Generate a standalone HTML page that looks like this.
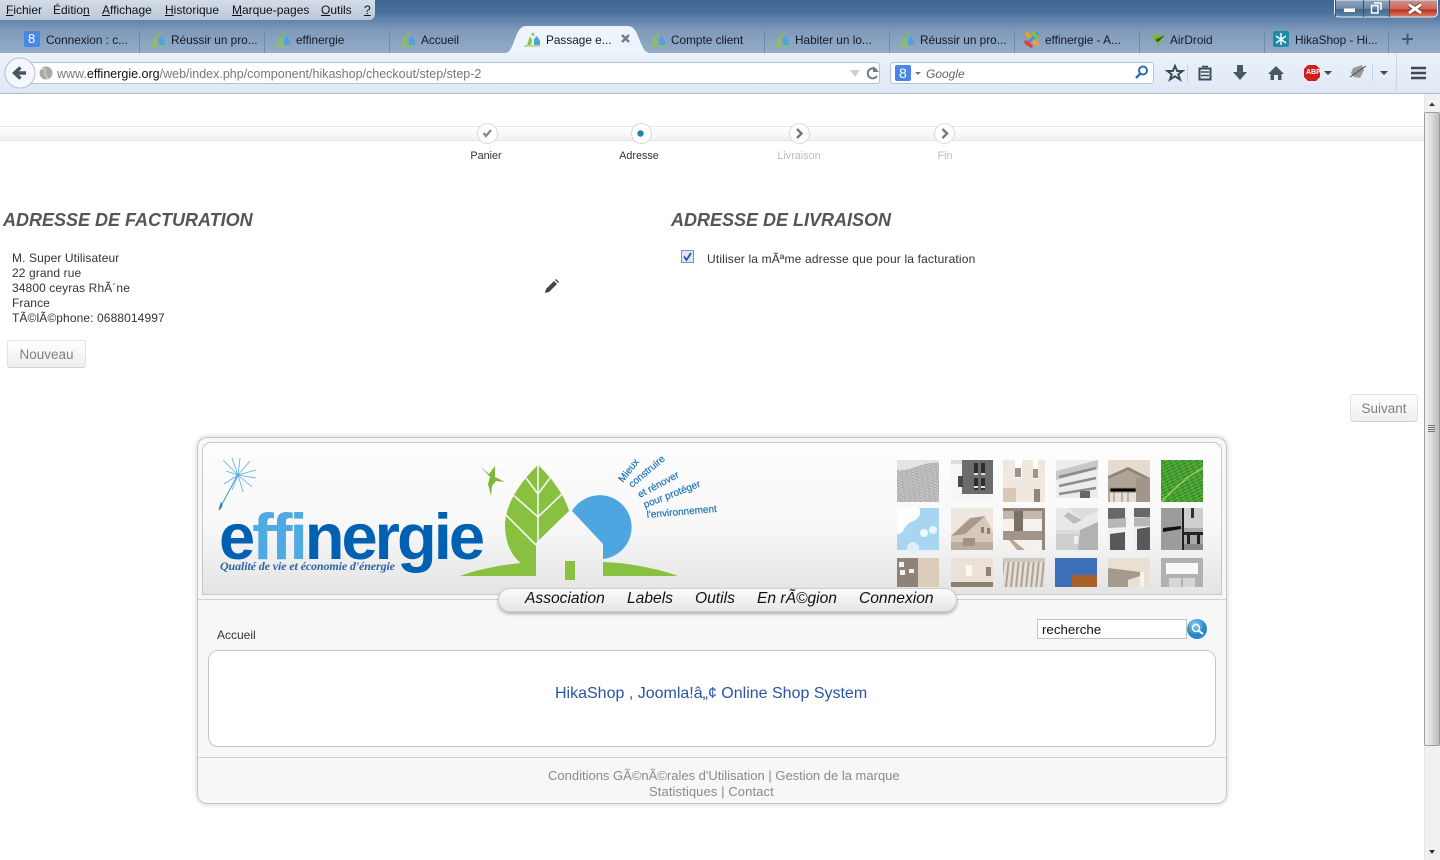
<!DOCTYPE html>
<html lang="fr"><head><meta charset="utf-8"><title>effinergie</title>
<style>
html,body{margin:0;padding:0;width:1440px;height:860px;overflow:hidden;background:#fff;font-family:"Liberation Sans",sans-serif}
.a{position:absolute;white-space:nowrap}
#title{left:0;top:0;width:1440px;height:53px;background:linear-gradient(#3c6494 0,#4a709e 12px,#7f9aba 30px,#93abc7 52px)}
#menu{left:0;top:0;width:375px;height:20px;background:linear-gradient(#d3dce7,#bcc9d9);border-radius:0 0 6px 0;font-size:12px;color:#111}
#menu span{position:absolute;top:3px}
#menu u{text-decoration:underline}
.tab{top:33px;font-size:11.8px;color:#101a28}
.sep{top:31px;width:1px;height:22px;background:#6f89a8}
#nav{left:0;top:53px;width:1440px;height:40px;background:linear-gradient(#eaf2fb,#dfe9f5);border-bottom:1px solid #aebccb}
#url{left:28px;top:62px;width:852px;height:22px;background:#fff;border:1px solid #b4c3d3;border-left:0;border-radius:0 3px 3px 0;box-sizing:border-box;font-size:12.5px;color:#777;line-height:22px;padding-left:29px}
#url b{font-weight:normal;color:#111}
#srch{left:890px;top:62px;width:264px;height:22px;background:#fff;border:1px solid #b4c3d3;border-radius:3px;box-sizing:border-box}
#bar{left:0;top:126px;width:1424px;height:15px;box-sizing:border-box;background:linear-gradient(#fff,#f1f1f1);border-top:1px solid #e6e6e6;border-bottom:1px solid #e6e6e6}
.c{top:123px;width:19px;height:19px;border-radius:50%;background:#fff;border:1px solid #d8d8d8}
.sl{top:150px;font-size:10.8px;line-height:13px;transform:translateX(-50%)}
h2{margin:0;position:absolute;top:209px;font-size:18px;line-height:22px;font-style:italic;font-weight:bold;color:#555;white-space:nowrap}
.t{font-size:12px;color:#333;line-height:15px;letter-spacing:.1px}
.btn{box-sizing:border-box;border:1px solid #e2e2e2;border-bottom-color:#d0d0d0;border-radius:3px;background:linear-gradient(#fff,#eee);font-size:13.5px;color:#808080;text-align:center}
#sb{left:1424px;top:94px;width:16px;height:766px;background:#f0f0f0;border-left:1px solid #e4e4e4;box-sizing:border-box}
#th{left:1424px;top:112px;width:16px;height:634px;box-sizing:border-box;border:1px solid #9d9d9d;border-radius:2px;background:linear-gradient(90deg,#f2f2f2,#dcdcdc 45%,#bdbdbd)}
#box{left:197px;top:437px;width:1030px;height:367px;box-sizing:border-box;background:#f7f7f7;border:1px solid #c6c6c6;border-radius:10px;box-shadow:0 0 6px rgba(0,0,0,.2)}
#hd{left:202px;top:442px;width:1020px;height:153px;box-sizing:border-box;background:linear-gradient(#fdfdfd 0,#f8f8f8 55%,#e4e4e4 100%);border:1px solid #c8c8c8;border-radius:9px 9px 0 0}
.ln{left:198px;width:1028px;height:1px;background:#cfcfcf}
#pill{left:498px;top:588px;width:459px;height:24px;box-sizing:border-box;background:linear-gradient(#fbfbfb,#e6e6e6);border:1px solid #cfcfcf;border-radius:12px;box-shadow:0 2px 3px rgba(0,0,0,.3)}
.m{top:590px;font-size:15.6px;line-height:18px;font-style:italic;color:#111}
#white{left:208px;top:650px;width:1008px;height:97px;box-sizing:border-box;background:#fff;border:1px solid #c6c6c6;border-radius:10px}
.ft{font-size:13px;line-height:16px;color:#8a8a8a}
</style></head><body>

<div class="a" id="title"></div>
<div class="a" id="menu">
<span style="left:6px"><u>F</u>ichier</span><span style="left:53px">Éditio<u>n</u></span><span style="left:102px"><u>A</u>ffichage</span><span style="left:165px"><u>H</u>istorique</span><span style="left:232px"><u>M</u>arque-pages</span><span style="left:321px"><u>O</u>utils</span><span style="left:364px"><u>?</u></span>
</div>

<!-- window buttons -->
<svg class="a" style="left:1334px;top:0" width="104" height="18">
<defs>
<linearGradient id="wb" x1="0" y1="0" x2="0" y2="1"><stop offset="0" stop-color="#8ea5bf"/><stop offset=".5" stop-color="#7189a6"/><stop offset=".55" stop-color="#466789"/><stop offset="1" stop-color="#5f86ab"/></linearGradient>
<linearGradient id="wr" x1="0" y1="0" x2="0" y2="1"><stop offset="0" stop-color="#d98a7f"/><stop offset=".5" stop-color="#c96a5c"/><stop offset=".58" stop-color="#bb3324"/><stop offset="1" stop-color="#dc7a60"/></linearGradient>
</defs>
<path d="M.5 0V12Q.5 17 5.500 17H98.500Q103.500 17 103.500 12V0Z" fill="url(#wb)" stroke="#e8edf3"/>
<path d="M55 1V16.500H98.500Q102.500 16.500 102.500 12V1Z" fill="url(#wr)"/>
<rect x="1" y="0" width="1" height="16" fill="#3a5473"/>
<path d="M29.500 0V17M55.500 0V17" stroke="#3a5473"/>
<rect x="10" y="8.500" width="11" height="3.500" fill="#fff"/>
<path d="M40 3H47V10M37.500 5.500H44V13H37.500Z" fill="none" stroke="#fff" stroke-width="1.500"/>
<path d="M75 4.500L87 13M87 4.500L75 13" stroke="#5a2820" stroke-width="4.500"/>
<path d="M75 4.500L87 13M87 4.500L75 13" stroke="#fff" stroke-width="3"/>
</svg>

<!-- tabs -->
<svg class="a" style="left:0;top:0" width="1330" height="54">
<defs><g id="ef"><path d="M3 14 L6 5 L8 9 L7 14Z" fill="#8cc63f"/><path d="M7 4 L9 1 L11 5Z" fill="#8cc63f"/><path d="M10 14 V8 L13 5 L16 10 V14Z" fill="#4fa3dc"/><path d="M0 15H16" stroke="#8cc63f" stroke-width="1"/></g></defs>
<path d="M505 53 C515 53 514 26 526 26 L628 26 C640 26 639 53 650 53Z" fill="#eef4fb"/>
<rect x="24" y="31" width="16" height="16" rx="2" fill="#4a86e8"/>
<use href="#ef" x="149" y="31"/><use href="#ef" x="274" y="31"/><use href="#ef" x="399" y="31"/><use href="#ef" x="524" y="31"/><use href="#ef" x="649" y="31"/><use href="#ef" x="773" y="31"/><use href="#ef" x="898" y="31"/>
<g transform="translate(1023,30)" fill="none" stroke-width="3.500" stroke-linecap="round"><path d="M4 4 L14 14" stroke="#f4a020"/><path d="M14 4 L4 14" stroke="#5091cd"/><path d="M3 12 L8 16" stroke="#e8402a"/><path d="M10 3 L14 7" stroke="#7ac143"/></g>
<path d="M1149 35 L1165 35 L1158 46 L1155 40Z" fill="#7fb52f"/><path d="M1155 40 L1165 35 L1158 42Z" fill="#2c5a2a"/>
<rect x="1273" y="31" width="16" height="16" rx="2" fill="#1e8aa5"/><path d="M1281 33V45M1276 36L1286 43M1286 36L1276 43" stroke="#fff" stroke-width="1.400"/>
<path d="M622 35 L629 42 M629 35 L622 42" stroke="#6f7b88" stroke-width="2.400"/>
</svg>
<svg class="a" style="left:1395px;top:30px" width="24" height="20"><path d="M7 9H18M12.500 3.500V14.500" stroke="#43597a" stroke-width="2"/></svg>
<div class="a sep" style="left:139px"></div><div class="a sep" style="left:264px"></div><div class="a sep" style="left:389px"></div><div class="a sep" style="left:764px"></div><div class="a sep" style="left:889px"></div><div class="a sep" style="left:1014px"></div><div class="a sep" style="left:1139px"></div><div class="a sep" style="left:1264px"></div><div class="a sep" style="left:1388px"></div>
<div class="a" style="left:28px;top:31px;font-size:13px;color:#fff">8</div>
<div class="a tab" style="left:46px">Connexion : c...</div>
<div class="a tab" style="left:171px">Réussir un pro...</div>
<div class="a tab" style="left:296px">effinergie</div>
<div class="a tab" style="left:421px">Accueil</div>
<div class="a tab" style="left:546px">Passage e...</div>
<div class="a tab" style="left:671px">Compte client</div>
<div class="a tab" style="left:795px">Habiter un lo...</div>
<div class="a tab" style="left:920px">Réussir un pro...</div>
<div class="a tab" style="left:1045px">effinergie - A...</div>
<div class="a tab" style="left:1170px">AirDroid</div>
<div class="a tab" style="left:1295px">HikaShop - Hi...</div>

<!-- nav -->
<div class="a" id="nav"></div>
<div class="a" id="url">www.<b>effinergie.org</b>/web/index.php/component/hikashop/checkout/step/step-2</div>
<div class="a" id="srch"></div>
<div class="a" style="left:926px;top:67px;font-size:12px;font-style:italic;color:#666">Google</div>
<svg class="a" style="left:0;top:53px" width="1440" height="41">
<circle cx="20" cy="20" r="15" fill="#f4f8fc" stroke="#b0bfcf"/>
<path d="M26 20H17M20.500 14.500L14.500 20L20.500 25.500" fill="none" stroke="#4a5563" stroke-width="3.400"/>
<circle cx="46" cy="20" r="6.500" fill="#a8a8a8"/><path d="M41 17C44 14 46 16 45 19C44 22 47 23 48 26" stroke="#ddd" fill="none"/>
<path d="M850 17H860L855 24Z" fill="#c8d0d8"/>
<path d="M876.500 17A5 5 0 1 0 877 23" fill="none" stroke="#6c7f92" stroke-width="2"/><path d="M873 13V19H879Z" fill="#6c7f92"/>
<rect x="895" y="12" width="16" height="16" rx="2" fill="#4a86e8"/>
<path d="M915 19H921L918 22Z" fill="#777"/>
<circle cx="1143" cy="17.500" r="4" fill="none" stroke="#2a6fb5" stroke-width="2"/><path d="M1140 21L1136 25" stroke="#2a6fb5" stroke-width="2.400"/>
<path d="M1175 13L1177.200 18H1182.500L1178.300 21.300L1180 26.500L1175 23.300L1170 26.500L1171.700 21.300L1167.500 18H1172.800Z" fill="none" stroke="#3e4a58" stroke-width="2"/>
<path d="M1187.500 11V30" stroke="#c9d3de"/>
<rect x="1199.500" y="15.500" width="11" height="11" fill="none" stroke="#3e4a58" stroke-width="2"/><path d="M1202 13.500H1208M1201 19H1209M1201 22.500H1209" stroke="#3e4a58" stroke-width="1.600"/>
<path d="M1237 12H1243V19H1247L1240 27L1233 19H1237Z" fill="#4a5766"/>
<path d="M1276 13L1284 21H1281.500V27H1278V22H1274V27H1270.500V21H1268Z" fill="#4a5766"/>
<path d="M1308 12H1316L1320 16V24L1316 28H1308L1304 24V16Z" fill="#d0201c"/>
<path d="M1324 18H1332L1328 22Z" fill="#444"/>
<path d="M1353 15L1362 12L1364 17L1360 25L1354 24L1351 20Z" fill="#9a9a9a"/><path d="M1350 24L1366 13" stroke="#444"/>
<path d="M1372.500 11V28" stroke="#c9d3de"/><path d="M1380 18H1388L1384 22Z" fill="#444"/>
<path d="M1396.500 0V41" stroke="#cdd7e2"/>
<path d="M1411 15H1426M1411 20H1426M1411 25H1426" stroke="#3e4a58" stroke-width="2.600"/>
</svg>
<div class="a" style="left:899px;top:65px;font-size:14px;color:#fff">8</div>
<div class="a" style="left:1306px;top:69px;font-size:7px;font-weight:bold;color:#fff">ABP</div>

<!-- steps -->
<div class="a" id="bar"></div>
<div class="a c" style="left:477px"></div><div class="a c" style="left:631px"></div><div class="a c" style="left:789px"></div><div class="a c" style="left:934px"></div>
<svg class="a" style="left:0;top:120px" width="1000" height="26">
<path d="M483.500 13L486 16L491 10" fill="none" stroke="#888" stroke-width="2.200"/>
<circle cx="640.500" cy="13.500" r="3.200" fill="#1d86a5"/>
<path d="M797 9L801.500 13.500L797 18" fill="none" stroke="#777" stroke-width="2.400"/>
<path d="M942.500 9L947 13.500L942.500 18" fill="none" stroke="#777" stroke-width="2.400"/>
</svg>
<div class="a sl" style="left:486px;color:#333">Panier</div>
<div class="a sl" style="left:639px;color:#333">Adresse</div>
<div class="a sl" style="left:799px;color:#bbb">Livraison</div>
<div class="a sl" style="left:945px;color:#bbb">Fin</div>

<!-- content -->
<h2 style="left:3px">ADRESSE DE FACTURATION</h2>
<h2 style="left:671px">ADRESSE DE LIVRAISON</h2>
<div class="a t" style="left:12px;top:251px">M. Super Utilisateur<br>22 grand rue<br>34800 ceyras RhÃ´ne<br>France<br>TÃ©lÃ©phone: 0688014997</div>
<svg class="a" style="left:543px;top:278px" width="17" height="17"><path d="M2 15L3 11L11 3L14 6L6 14Z" fill="#444"/><path d="M12 2L13 1L16 4L15 5Z" fill="#444"/></svg>
<div class="a btn" style="left:7px;top:340px;width:79px;height:28px;line-height:27px">Nouveau</div>
<div class="a btn" style="left:1350px;top:394px;width:68px;height:28px;line-height:27px">Suivant</div>
<svg class="a" style="left:681px;top:250px" width="14" height="14"><rect x=".5" y=".5" width="12" height="12" fill="#dfe6f5" stroke="#8a8f98"/><path d="M3 6.500L5.500 10L10 3" fill="none" stroke="#2c4fa8" stroke-width="1.800"/></svg>
<div class="a t" style="left:707px;top:252px;letter-spacing:.16px">Utiliser la mÃªme adresse que pour la facturation</div>

<!-- scrollbar -->
<div class="a" id="sb"></div>
<div class="a" id="th"></div>
<svg class="a" style="left:1424px;top:94px" width="16" height="766">
<path d="M5 12H11L8 8.500Z" fill="#333"/><path d="M5 756H11L8 760Z" fill="#333"/>
<path d="M4 331.500H11M4 333.500H11M4 335.500H11M4 337.500H11" stroke="#777"/>
</svg>

<!-- site box -->
<div class="a" id="box"></div>
<div class="a ln" style="top:599px"></div>
<div class="a ln" style="top:757px"></div>
<div class="a" id="hd"></div>

<!-- tiles -->
<svg class="a" style="left:0;top:0" width="1240" height="600">
<defs>
<pattern id="nz" width="5" height="3" patternUnits="userSpaceOnUse" patternTransform="rotate(-8)"><rect width="5" height="3" fill="#c6c6c6"/><path d="M0 1H3M2 2.500H5" stroke="#9c9c9c" stroke-width=".8"/></pattern>
<pattern id="gr" width="6" height="3" patternUnits="userSpaceOnUse" patternTransform="rotate(-25)"><rect width="6" height="3" fill="#48a030"/><path d="M0 1H4" stroke="#2f8424"/><path d="M2 2.500H6" stroke="#6cbb4c" stroke-width=".7"/></pattern>
<pattern id="st" width="5" height="8" patternUnits="userSpaceOnUse" patternTransform="rotate(6)"><rect width="5" height="8" fill="#e6dfd7"/><rect width="2" height="8" fill="#aca297"/></pattern>
</defs>
<!-- row 1 -->
<g transform="translate(897,460)"><rect width="42" height="42" fill="url(#nz)"/><path d="M0 0H42V3C28 0 14 12 0 10Z" fill="#e4e4e4"/></g>
<g transform="translate(951,460)"><rect width="42" height="42" fill="#f6f6f6"/><rect x="0" y="0" width="11" height="4" fill="#ddd"/><rect x="11" y="0" width="31" height="34" fill="#6c6c6c"/><rect x="7" y="16" width="5" height="11" fill="#4a4a4a"/><path d="M23 3h4v10h-4zM30 3h4v10h-4zM23 18h4v12h-4zM30 18h4v12h-4z" fill="#2d2d2d"/><path d="M23 13h4v2h-4zM30 13h4v2h-4zM23 26h4v2h-4zM30 26h4v2h-4z" fill="#ddd"/></g>
<g transform="translate(1003,460)"><rect width="42" height="42" fill="#f0e8de"/><path d="M12 0h7v18h-7zM30 0h5v19h-5z" fill="#fff"/><path d="M12 8h6v9h-6zM30 9h5v9h-5z" fill="#9f9489"/><rect y="28" width="13" height="14" fill="#d9c8b3"/><rect x="31" y="29" width="6" height="13" fill="#8f867c"/></g>
<g transform="translate(1056,460)"><rect width="42" height="42" fill="#ececec"/><path d="M0 11L42 0V9L0 20Z" fill="#c8c8c8"/><path d="M3 17L40 8M3 26L40 18M3 34L40 28" stroke="#8c8c8c" stroke-width="2.500"/><path d="M0 38H42V42H0Z" fill="#fafafa"/><path d="M24 31h10v7h-10z" fill="#666"/></g>
<g transform="translate(1108,460)"><rect width="42" height="42" fill="#e6dbd0"/><path d="M0 18L20 9L42 20V42H0Z" fill="#b0a497"/><path d="M0 16L20 7L42 18V21L20 10L0 19Z" fill="#8f8478"/><rect x="2" y="28" width="26" height="14" fill="#e7dfd6"/><path d="M2 28h26v4h-26zM6 32v10M14 32v10M20 32v10" stroke="#8f8478"/><rect x="28" y="18" width="14" height="24" fill="#a2968a"/></g>
<g transform="translate(1161,460)"><rect width="42" height="42" fill="url(#gr)"/><path d="M0 42C12 30 26 16 42 8" fill="none" stroke="#a7d36f" stroke-width="1.200"/></g>
<!-- row 2 -->
<g transform="translate(897,508)"><rect width="42" height="42" fill="#a8d6f2"/><path d="M0 0H22C26 6 20 12 14 14C6 18 8 26 0 26Z" fill="#fdfefe"/><circle cx="27" cy="25" r="4" fill="#f0f8fd"/><circle cx="36" cy="22" r="4" fill="#eaf5fc"/><circle cx="16" cy="40" r="6" fill="#dceffa"/></g>
<g transform="translate(951,508)"><rect width="42" height="42" fill="#efe8e0"/><path d="M0 28L18 10L34 8L42 24V42H0Z" fill="#d7c9b9"/><path d="M0 28L20 10L34 8L14 26Z" fill="#a89a8a"/><rect y="34" width="42" height="8" fill="#bcae9e"/><rect x="12" y="30" width="12" height="8" fill="#9f9385"/><path d="M30 19h3v6h-3zM36 20h3v6h-3z" fill="#8a7f72"/></g>
<g transform="translate(1003,508)"><rect width="42" height="42" fill="#f5f1ec"/><rect width="42" height="3" fill="#8e8378"/><path d="M0 3h42v8h-42z" fill="#c5b8aa"/><rect x="11" y="3" width="9" height="25" fill="#7a7067"/><rect y="23" width="40" height="9" fill="#a2958a"/><rect x="39" y="0" width="3" height="42" fill="#94887c"/><path d="M10 32L22 42H14L6 32Z" fill="#b5a899"/></g>
<g transform="translate(1056,508)"><rect width="42" height="42" fill="#ddd"/><path d="M0 0H12L26 11L42 2V18L28 22L0 22Z" fill="#e9e9e9"/><path d="M12 4L26 12L18 16L8 8Z" fill="#bdbdbd"/><path d="M24 22L42 14V42H22Z" fill="#b2b2b2"/><rect y="26" width="22" height="16" fill="#cfcfcf"/><rect x="18" y="28" width="4" height="8" fill="#f0f0f0"/></g>
<g transform="translate(1108,508)"><rect width="42" height="42" fill="#f0f0f0"/><path d="M0 0h17v11h-17zM26 0h16v9h-16z" fill="#686868"/><path d="M0 11L42 9V18L0 20Z" fill="#b7b7b7"/><path d="M2 26L17 24V42H2ZM29 21L42 19V42H29Z" fill="#585858"/><rect x="18" y="0" width="8" height="42" fill="#f4f4f4"/></g>
<g transform="translate(1161,508)"><rect width="42" height="42" fill="#a9a9a9"/><path d="M0 0h20v42h-20z" fill="#9c9c9c"/><rect x="21" y="0" width="2" height="42" fill="#1e1e1e"/><path d="M2 20L20 18V21L2 24Z" fill="#111"/><path d="M23 0h19v20h-19z" fill="#cfcfcf"/><rect x="30" y="0" width="3" height="10" fill="#333"/><path d="M23 24h19v3h-19zM26 27h3v12h-3zM36 27h3v12h-3z" fill="#222"/><rect x="23" y="36" width="19" height="6" fill="#888"/></g>
<!-- row 3 -->
<g transform="translate(897,558)"><rect width="42" height="29" fill="#dccdbb"/><rect width="21" height="29" fill="#8e8378"/><path d="M2 4h5v5h-5zM12 11h5v4h-5zM3 12h5v5h-5z" fill="#f5f2ee"/></g>
<g transform="translate(951,558)"><rect width="42" height="29" fill="#ebe1d6"/><rect x="15" y="7" width="6" height="11" fill="#fbf8f4"/><rect x="35" y="9" width="5" height="9" fill="#8d8378"/><rect y="24" width="42" height="5" fill="#8c8073"/></g>
<g transform="translate(1003,558)"><rect width="42" height="29" fill="url(#st)"/><rect width="42" height="4" fill="#cfc8c0"/></g>
<g transform="translate(1055,558)"><rect width="42" height="29" fill="#3c6fb8"/><rect x="17" y="17" width="25" height="12" fill="#a8602a"/></g>
<g transform="translate(1108,558)"><rect width="42" height="29" fill="#e9dfd3"/><path d="M0 10L32 14V18L20 22V29H0Z" fill="#a59a8e"/><path d="M32 14L36 14V29H32Z" fill="#f6f2ec"/></g>
<g transform="translate(1161,558)"><rect width="42" height="29" fill="#b1b1b1"/><rect x="5" y="5" width="32" height="11" fill="#f8f8f8"/><path d="M8 20h12v9h-12zM22 20h12v9h-12z" fill="#d6d6d6"/></g>
</svg>

<!-- logo -->
<svg class="a" style="left:0;top:0" width="890" height="600">
<g stroke="#5aaee0" stroke-width=".8" fill="none"><path d="M238 475L223 460M238 475L232 458M238 475L240 458M238 475L250 461M238 475L256 470M238 475L256 478M238 475L252 487M238 475L243 492M238 475L226 471M238 475L224 484M238 475L232 490"/></g>
<path d="M237 476L220 508" stroke="#3f96d6" stroke-width="1"/><path d="M221 503L219 510L222 506Z" fill="#2f7fc0" stroke="#2f7fc0"/>
<text x="219" y="559" font-family="'Liberation Sans',sans-serif" font-size="65" font-weight="bold" fill="#0060b2" textLength="266" lengthAdjust="spacing">e<tspan fill="#4fa9e2">ffi</tspan>nergie</text>
<text x="220" y="570" font-family="'Liberation Serif',serif" font-size="12" font-style="italic" font-weight="bold" fill="#2c64a4" textLength="175" lengthAdjust="spacing">Qualité de vie et économie d'énergie</text>
<path d="M538 465 C552 478 565 496 569 511 L538 541 L536 543 V576 H460 C476 570 500 565 521 563 C510 555 505 540 505 525 C505 505 520 482 538 465Z" fill="#87c13f"/>
<g stroke="#f5f5f5" stroke-width="1.600" fill="none"><path d="M538 465V543M538 494L526 478M538 494L550 478M538 517L512 494M538 517L562 494M536 545L505 514"/></g>
<rect x="565" y="561" width="10" height="19" fill="#87c13f"/>
<path d="M603 562 C630 563 660 569 678 576 H603Z" fill="#87c13f"/>
<path d="M572 511 A32 32 0 1 1 603 559 V544Z" fill="#4ea6e0"/>
<path d="M480 466 L489 474 L495 466 L495 477 L505 482 L496 481 L492 486 L491 496 L488 484 L490 477Z" fill="#7cb83a"/>
<g font-family="'Liberation Sans',sans-serif" font-size="10" fill="#1f74be" stroke="#1f74be" stroke-width=".2">
<text transform="translate(623,483) rotate(-52)">Mieux</text>
<text transform="translate(632,488) rotate(-40)">construire</text>
<text transform="translate(640,498) rotate(-28)">et rénover</text>
<text transform="translate(645,508) rotate(-21)">pour protéger</text>
<text transform="translate(647,518) rotate(-5)">l'environnement</text>
</g>
</svg>

<!-- menu pill -->
<div class="a" id="pill"></div>
<div class="a m" style="left:525px">Association</div>
<div class="a m" style="left:627px">Labels</div>
<div class="a m" style="left:695px">Outils</div>
<div class="a m" style="left:757px">En rÃ©gion</div>
<div class="a m" style="left:859px">Connexion</div>

<div class="a t" style="left:217px;top:628px;color:#333;letter-spacing:0">Accueil</div>
<div class="a" style="left:1037px;top:619px;width:150px;height:20px;box-sizing:border-box;background:#fff;border:1px solid #c4c4c4;font-size:13.3px;line-height:20px;padding-left:4px;color:#111">recherche</div>
<svg class="a" style="left:1186px;top:618px" width="22" height="22"><defs><radialGradient id="g" cx=".4" cy=".3"><stop offset="0" stop-color="#8fd0f2"/><stop offset="1" stop-color="#2a86c6"/></radialGradient></defs><circle cx="11" cy="11" r="10" fill="url(#g)"/><circle cx="10" cy="10" r="3.500" fill="none" stroke="#fff" stroke-width="1.500"/><path d="M13 13L17 16" stroke="#fff" stroke-width="2"/></svg>

<div class="a" id="white"></div>
<div class="a" style="left:555px;top:684px;font-size:16px;line-height:19px;color:#2a54a6">HikaShop , Joomla!â„¢ Online Shop System</div>
<div class="a ft" style="left:548px;top:768px">Conditions GÃ©nÃ©rales d'Utilisation | Gestion de la marque</div>
<div class="a ft" style="left:649px;top:784px;letter-spacing:.1px">Statistiques | Contact</div>

</body></html>
